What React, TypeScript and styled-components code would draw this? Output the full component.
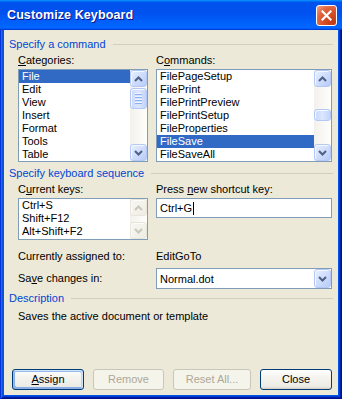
import React from "react";
import styled, { createGlobalStyle } from "styled-components";

const GlobalStyle = createGlobalStyle`
  html, body { margin: 0; padding: 0; background: #ECE9D8; }
  body { font-family: "Liberation Sans", Arial, sans-serif; font-size: 11px; color: #000; }
  * { box-sizing: border-box; }
  u { text-decoration: underline; text-underline-offset: 1px; }
`;

const Window = styled.div`
  width: 342px;
  height: 399px;
  display: flex;
  flex-direction: column;
  background: #0054E3;
  overflow: hidden;
`;

const TitleBar = styled.div`
  height: 30px;
  flex: 0 0 30px;
  display: flex;
  align-items: center;
  justify-content: space-between;
  padding: 0 5px 0 7px;
  background: linear-gradient(180deg, #0997ff 0%, #0053ee 8%, #0050ee 40%, #0066ff 88%, #0066ff 93%, #005bff 95%, #003dd7 96%, #003dd7 100%);
`;

const TitleText = styled.span`
  color: #fff;
  font-family: "Liberation Sans", Arial, sans-serif;
  font-weight: bold;
  font-size: 12.5px;
  letter-spacing: 0.1px;
  text-shadow: 1px 1px #0f1089;
`;

const CloseButton = styled.div`
  width: 21px;
  height: 21px;
  border: 1px solid #fff;
  border-radius: 3px;
  background: radial-gradient(circle at 85% 85%, #c23a12 0%, #d9512a 45%, #e26a45 70%, #f4a88c 100%);
  display: flex;
  align-items: center;
  justify-content: center;
`;

const Frame = styled.div`
  flex: 1;
  display: flex;
  padding: 0 4px 4px 4px;
  background: #0055e5;
  box-shadow: inset 1px 0 #0831d9, inset -1px -1px #00138c, inset 2px 0 #166aee, inset -2px -2px #001ea0, inset 3px 0 #0855dd, inset -3px -3px #003bda;
`;

const Body = styled.div`
  flex: 1;
  display: flex;
  flex-direction: column;
  background: #ECE9D8;
  padding: 8px 5px 5px 5px;
`;

const GroupHeader = styled.div<{ $mt?: number }>`
  display: flex;
  align-items: center;
  gap: 7px;
  height: 13px;
  line-height: 13px;
  margin-top: ${(p) => p.$mt ?? 0}px;
  color: #0046d5;
  white-space: nowrap;
  &::after {
    content: "";
    flex: 1;
    height: 1px;
    background: #d0d0bf;
  }
`;

const Columns = styled.div<{ $mt?: number; $center?: boolean }>`
  display: grid;
  grid-template-columns: 130px 176px;
  column-gap: 8px;
  padding-left: 9px;
  margin-top: ${(p) => p.$mt ?? 0}px;
  align-items: ${(p) => (p.$center ? "center" : "start")};
`;

const Field = styled.div`
  display: flex;
  flex-direction: column;
`;

const Label = styled.div<{ $mb?: number }>`
  height: 13px;
  line-height: 13px;
  margin-bottom: ${(p) => p.$mb ?? 2}px;
  white-space: nowrap;
`;

const Text = styled.div`
  height: 13px;
  line-height: 13px;
  white-space: nowrap;
`;

const DescText = styled(Text)`
  padding-left: 9px;
  margin-top: 5px;
`;

const ListBox = styled.div<{ $h: number }>`
  height: ${(p) => p.$h}px;
  border: 1px solid #7f9db9;
  background: #fff;
  display: flex;
  overflow: hidden;
`;

const Items = styled.div`
  flex: 1;
  overflow: hidden;
`;

const Item = styled.div<{ $sel?: boolean }>`
  height: 13px;
  line-height: 13px;
  padding-left: 3px;
  white-space: nowrap;
  background: ${(p) => (p.$sel ? "#316ac5" : "transparent")};
  color: ${(p) => (p.$sel ? "#fff" : "#000")};
`;

const VScroll = styled.div`
  width: 17px;
  flex: 0 0 17px;
  display: flex;
  flex-direction: column;
  background: linear-gradient(90deg, #f3f1ec 0%, #fefefb 100%);
`;

const ScrollButton = styled.div<{ $disabled?: boolean }>`
  width: 17px;
  height: 17px;
  flex: 0 0 17px;
  border-radius: 3px;
  border: 1px solid ${(p) => (p.$disabled ? "#e8e6da" : "#b4c8f6")};
  background: ${(p) =>
    p.$disabled
      ? "linear-gradient(135deg, #f7f6f1 0%, #eeede5 100%)"
      : "linear-gradient(135deg, #e8efff 0%, #cddbfc 55%, #b7ccf9 100%)"};
  box-shadow: inset 1px 1px ${(p) => (p.$disabled ? "#fbfbf8" : "#f4f8ff")};
  display: flex;
  align-items: center;
  justify-content: center;
`;

const Track = styled.div`
  flex: 1;
  display: flex;
  flex-direction: column;
`;

const Thumb = styled.div<{ $h: number; $top: number }>`
  height: ${(p) => p.$h}px;
  margin-top: ${(p) => p.$top}px;
  border-radius: 3px;
  border: 1px solid #b4c8f6;
  background: linear-gradient(90deg, #c9d8fc 0%, #dbe6fe 50%, #c3d4fb 100%);
  box-shadow: inset 1px 1px #f4f8ff;
  display: flex;
  flex-direction: column;
  align-items: center;
  justify-content: center;
  gap: 1px;
`;

const Grip = styled.div`
  width: 7px;
  height: 1px;
  background: #eef4fe;
  box-shadow: 0 1px #8cb0f8;
  margin-bottom: 1px;
`;

const TextInput = styled.div`
  height: 20px;
  border: 1px solid #7f9db9;
  background: #fff;
  display: flex;
  align-items: center;
  padding-left: 3px;
  line-height: 13px;
`;

const Caret = styled.span`
  display: inline-block;
  width: 1px;
  height: 13px;
  background: #000;
  margin-left: 1px;
`;

const Combo = styled.div`
  height: 21px;
  border: 1px solid #7f9db9;
  background: #fff;
  display: flex;
  align-items: stretch;
`;

const ComboText = styled.div`
  flex: 1;
  padding-left: 3px;
  display: flex;
  align-items: center;
`;

const ComboButton = styled(ScrollButton)`
  height: 19px;
  flex: 0 0 17px;
`;

const ButtonRow = styled.div`
  display: flex;
  gap: 9px;
  padding-left: 3px;
  margin-top: auto;
`;

const Button = styled.div<{ $w: number; $default?: boolean; $disabled?: boolean }>`
  width: ${(p) => p.$w}px;
  height: 21px;
  border-radius: 3px;
  border: 1px solid ${(p) => (p.$disabled ? "#c9c7ba" : "#003c74")};
  background: ${(p) =>
    p.$disabled
      ? "#f5f4ea"
      : "linear-gradient(180deg, #ffffff 0%, #f4f3ee 40%, #ecebe6 86%, #d6d0c5 100%)"};
  color: ${(p) => (p.$disabled ? "#aca899" : "#000")};
  box-shadow: ${(p) =>
    p.$default
      ? "inset -1px 1px #cee7ff, inset 1px 2px #98b8ea, inset -2px 2px #bcd4f6, inset 1px -1px #89ade4, inset 2px -2px #89ade4"
      : "none"};
  display: flex;
  align-items: center;
  justify-content: center;
  line-height: 13px;
`;

const Arrow = ({ up, color }: { up?: boolean; color: string }) => (
  <svg width="9" height="6" viewBox="0 0 9 6">
    <polyline
      points={up ? "1,5 4.5,1.5 8,5" : "1,1 4.5,4.5 8,1"}
      fill="none"
      stroke={color}
      strokeWidth="2"
    />
  </svg>
);

const Scrollbar = ({
  thumb,
  disabled,
}: {
  thumb?: { h: number; top: number; grip?: boolean };
  disabled?: boolean;
}) => (
  <VScroll>
    <ScrollButton $disabled={disabled}>
      <Arrow up color={disabled ? "#c9c7ba" : "#4d6185"} />
    </ScrollButton>
    <Track>
      {thumb && (
        <Thumb $h={thumb.h} $top={thumb.top}>
          {thumb.grip && (
            <>
              <Grip />
              <Grip />
              <Grip />
              <Grip />
            </>
          )}
        </Thumb>
      )}
    </Track>
    <ScrollButton $disabled={disabled}>
      <Arrow color={disabled ? "#c9c7ba" : "#4d6185"} />
    </ScrollButton>
  </VScroll>
);

const categories = ["File", "Edit", "View", "Insert", "Format", "Tools", "Table"];
const commands = [
  "FilePageSetup",
  "FilePrint",
  "FilePrintPreview",
  "FilePrintSetup",
  "FileProperties",
  "FileSave",
  "FileSaveAll",
];
const keys = ["Ctrl+S", "Shift+F12", "Alt+Shift+F2"];

export default function App() {
  return (
    <>
      <GlobalStyle />
      <Window>
        <TitleBar>
          <TitleText>Customize Keyboard</TitleText>
          <CloseButton>
            <svg width="11" height="11" viewBox="0 0 11 11">
              <path d="M1.5 1.5 L9.5 9.5 M9.5 1.5 L1.5 9.5" stroke="#fff" strokeWidth="2.2" strokeLinecap="square" />
            </svg>
          </CloseButton>
        </TitleBar>
        <Frame>
          <Body>
            <GroupHeader>Specify a command</GroupHeader>
            <Columns $mt={3}>
              <Field>
                <Label>
                  <u>C</u>ategories:
                </Label>
                <ListBox $h={93}>
                  <Items>
                    {categories.map((c, i) => (
                      <Item key={c} $sel={i === 0}>
                        {c}
                      </Item>
                    ))}
                  </Items>
                  <Scrollbar thumb={{ h: 21, top: 1, grip: true }} />
                </ListBox>
              </Field>
              <Field>
                <Label>
                  C<u>o</u>mmands:
                </Label>
                <ListBox $h={93}>
                  <Items>
                    {commands.map((c) => (
                      <Item key={c} $sel={c === "FileSave"}>
                        {c}
                      </Item>
                    ))}
                  </Items>
                  <Scrollbar thumb={{ h: 12, top: 22 }} />
                </ListBox>
              </Field>
            </Columns>
            <GroupHeader $mt={5}>Specify keyboard sequence</GroupHeader>
            <Columns $mt={3}>
              <Field>
                <Label>
                  C<u>u</u>rrent keys:
                </Label>
                <ListBox $h={42}>
                  <Items>
                    {keys.map((k) => (
                      <Item key={k}>{k}</Item>
                    ))}
                  </Items>
                  <Scrollbar disabled />
                </ListBox>
              </Field>
              <Field>
                <Label>
                  Press <u>n</u>ew shortcut key:
                </Label>
                <TextInput>
                  Ctrl+G
                  <Caret />
                </TextInput>
              </Field>
            </Columns>
            <Columns $mt={10}>
              <Text>Currently assigned to:</Text>
              <Text>EditGoTo</Text>
            </Columns>
            <Columns $mt={5} $center>
              <Text>
                Sa<u>v</u>e changes in:
              </Text>
              <Combo>
                <ComboText>Normal.dot</ComboText>
                <ComboButton>
                  <Arrow color="#4d6185" />
                </ComboButton>
              </Combo>
            </Columns>
            <GroupHeader $mt={3}>Description</GroupHeader>
            <DescText>Saves the active document or template</DescText>
            <ButtonRow>
              <Button $w={72} $default>
                <span>
                  <u>A</u>ssign
                </span>
              </Button>
              <Button $w={71} $disabled>
                Remove
              </Button>
              <Button $w={78} $disabled>
                Reset All...
              </Button>
              <Button $w={72}>Close</Button>
            </ButtonRow>
          </Body>
        </Frame>
      </Window>
    </>
  );
}
